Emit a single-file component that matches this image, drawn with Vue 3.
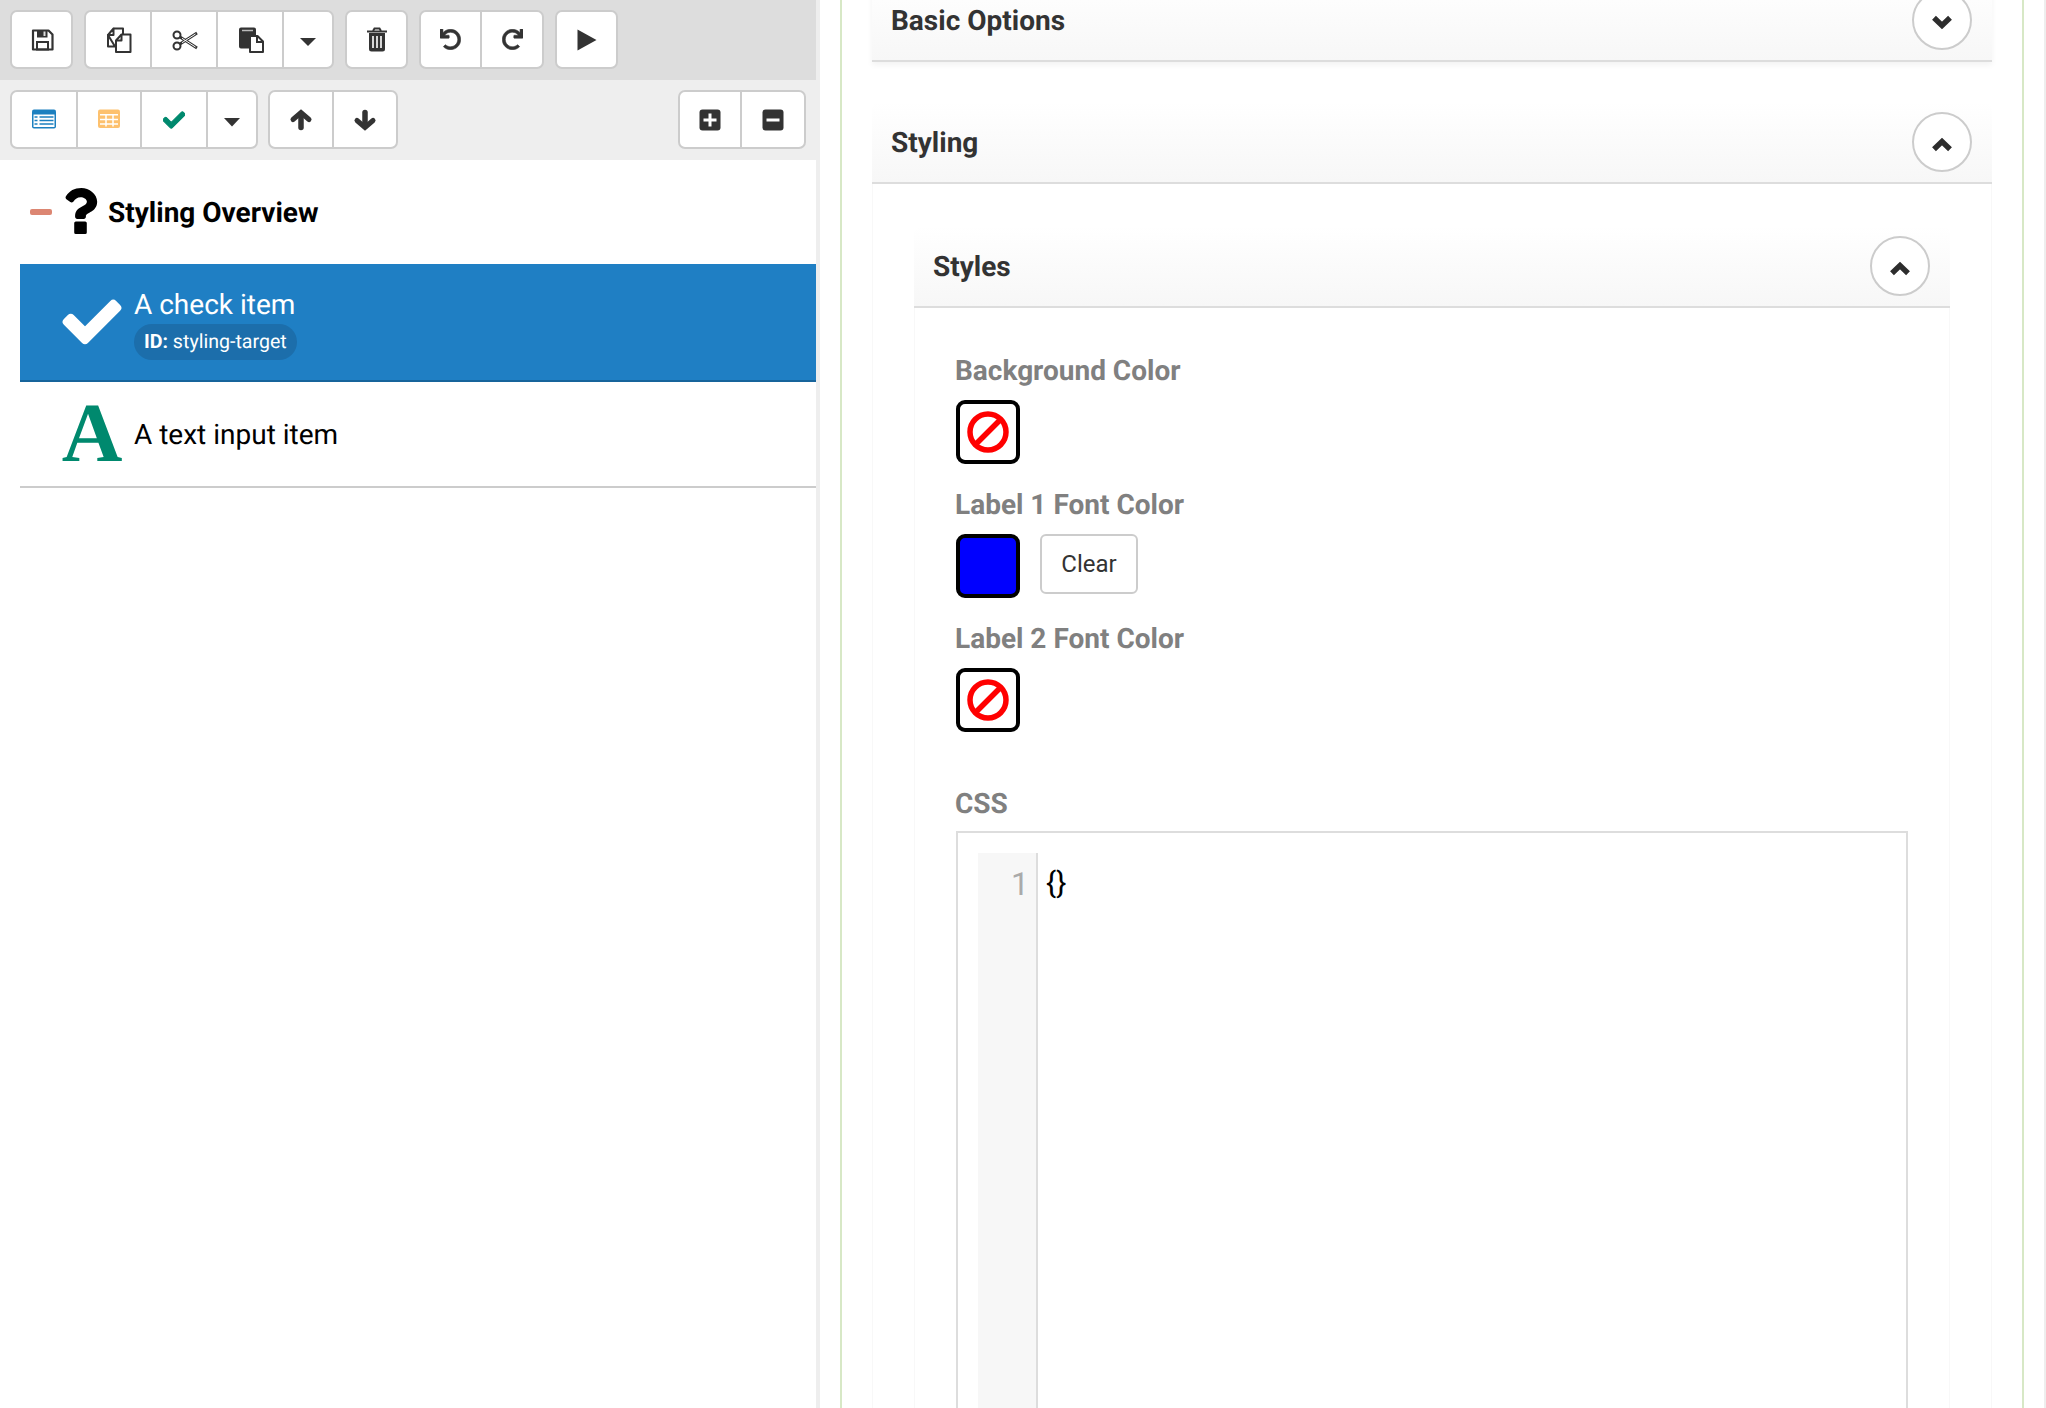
<script setup>
const check = 'M173.898 439.404l-166.4-166.4c-9.997-9.997-9.997-26.206 0-36.204l36.203-36.204c9.997-9.998 26.207-9.998 36.204 0L192 312.69 432.095 72.596c9.997-9.997 26.207-9.997 36.204 0l36.203 36.204c9.997 9.997 9.997 26.206 0 36.204l-294.4 294.401c-9.998 9.997-26.207 9.997-36.204-.001z'
const undo = 'M212.333 224.333H12c-6.627 0-12-5.373-12-12V12C0 5.373 5.373 0 12 0h48c6.627 0 12 5.373 12 12v78.112C117.773 39.279 184.26 7.47 258.175 8.007c136.906.994 246.448 111.623 246.157 248.532C504.041 393.258 393.12 504 256.333 504c-64.089 0-122.496-24.313-166.51-64.215-5.099-4.622-5.334-12.554-.467-17.42l33.967-33.967c4.474-4.474 11.662-4.717 16.401-.525C170.76 415.336 211.58 432 256.333 432c97.268 0 176-78.716 176-176 0-97.267-78.716-176-176-176-58.496 0-110.28 28.476-142.274 72.333h98.274c6.627 0 12 5.373 12 12v48c0 6.627-5.373 12-12 12z'
const question = 'M202.021 0C122.202 0 70.503 32.703 29.914 91.026c-7.363 10.58-5.093 25.086 5.178 32.874l43.138 32.709c10.373 7.865 25.132 6.026 33.253-4.148 25.049-31.381 43.63-49.449 82.757-49.449 30.764 0 68.816 19.799 68.816 49.631 0 22.552-18.617 34.134-48.993 51.164-35.423 19.86-82.299 44.576-82.299 106.405V320c0 13.255 10.745 24 24 24h72.471c13.255 0 24-10.745 24-24v-5.773c0-42.86 125.268-44.645 125.268-160.627C377.504 66.256 286.902 0 202.021 0zM140 372h104a18 18 0 0 1 18 18v104a18 18 0 0 1-18 18H140a18 18 0 0 1-18-18V390a18 18 0 0 1 18-18z'
</script>

<template>
  <div class="page">
    <aside class="left">
      <div class="bar bar-top">
        <div class="group">
          <button class="btn" style="width:63px">
            <svg viewBox="0 0 32 32" class="ico"><path d="M7 6.500h15.500l4 4V25.500H7z" fill="none" stroke="#333" stroke-width="2.200" stroke-linejoin="round"/><path d="M11 6h10.500v7.500H11z" fill="#333"/><path d="M17.500 7.500h2v4.500h-2z" fill="#ddd"/><path d="M11 18h11v7.500H11z" fill="none" stroke="#333" stroke-width="2"/></svg>
          </button>
        </div>
        <div class="group">
          <button class="btn" style="width:68px">
            <svg viewBox="0 0 32 32" class="ico"><path d="M11.500 4.500H21V10M13 22.500H6V11z" fill="none" stroke="#333" stroke-width="2" stroke-linejoin="round"/><path d="M11.500 4.500L6 11h5.500z" fill="none" stroke="#333" stroke-width="2" stroke-linejoin="round"/><path d="M19.500 10.500H28.500V28H14V16.500z" fill="#fff" stroke="#333" stroke-width="2" stroke-linejoin="round"/><path d="M19.500 10.500v6H14" fill="none" stroke="#333" stroke-width="2" stroke-linejoin="round"/></svg>
          </button>
          <button class="btn" style="width:66px">
            <svg viewBox="0 0 32 32" class="ico"><circle cx="9" cy="11" r="3.500" fill="none" stroke="#333" stroke-width="2"/><circle cx="9" cy="22" r="3.500" fill="none" stroke="#333" stroke-width="2"/><path d="M12 13L29 24M12 20L29 9" fill="none" stroke="#333" stroke-width="2.800"/><path d="M14 14.300L27.500 23M14 18.700L27.500 10" fill="none" stroke="#fff" stroke-width="1"/></svg>
          </button>
          <button class="btn" style="width:66px">
            <svg viewBox="0 0 32 32" class="ico"><path d="M7 3.500h13a2 2 0 0 1 2 2V12h-7v12.500H7a2 2 0 0 1-2-2v-17a2 2 0 0 1 2-2z" fill="#333"/><path d="M8 6.500h11" stroke="#bbb" stroke-width="1.500"/><path d="M16 12h7.500l5.500 5.500V28H16z" fill="#fff" stroke="#333" stroke-width="2" stroke-linejoin="round"/><path d="M23 12.500v5.500h6" fill="none" stroke="#333" stroke-width="2"/></svg>
          </button>
          <button class="btn" style="width:50px">
            <svg viewBox="0 0 32 32" class="ico"><path d="M8 14h16l-8 8z" fill="#333"/></svg>
          </button>
        </div>
        <div class="group">
          <button class="btn" style="width:63px">
            <svg viewBox="0 0 32 32" class="ico"><path d="M6 7.500h20" stroke="#333" stroke-width="2"/><path d="M12 7l1.500-2.500h5L20 7" fill="none" stroke="#333" stroke-width="2"/><path d="M8 9h16v16a2.500 2.500 0 0 1-2.500 2.500h-11A2.500 2.500 0 0 1 8 25z" fill="#333"/><path d="M12 12v12M16 12v12M20 12v12" stroke="#fff" stroke-width="1.600"/></svg>
          </button>
        </div>
        <div class="group">
          <button class="btn" style="width:63px">
            <svg viewBox="0 0 512 512" class="ico-21"><path :d="undo" fill="#333" stroke="#333" stroke-width="14"/></svg>
          </button>
          <button class="btn" style="width:62px">
            <svg viewBox="0 0 512 512" class="ico-21 flip"><path :d="undo" fill="#333" stroke="#333" stroke-width="14"/></svg>
          </button>
        </div>
        <div class="group">
          <button class="btn" style="width:63px">
            <svg viewBox="0 0 32 32" class="ico"><path d="M6.500 5.500L25.500 16 6.500 26.500z" fill="#333"/></svg>
          </button>
        </div>
      </div>

      <div class="bar bar-sub">
        <div class="group">
          <button class="btn" style="width:68px">
            <svg viewBox="0 0 32 32" class="ico"><rect x="4" y="5.500" width="24" height="19" rx="2" fill="#1c80c0"/><path d="M5.500 10.500h21V23h-21z" fill="#fff"/><path d="M6.500 13h3M6.500 16.500h3M6.500 20h3M11.500 13h14M11.500 16.500h14M11.500 20h14" stroke="#1c80c0" stroke-width="1.700"/></svg>
          </button>
          <button class="btn" style="width:64px">
            <svg viewBox="0 0 32 32" class="ico"><rect x="5" y="5.500" width="22" height="18.500" rx="2" fill="#fdc16e"/><path d="M7 10.800h18M7 15.500h18M7 20h18M13 10v12.500M20 10v12.500" stroke="#fff" stroke-width="1.500"/></svg>
          </button>
          <button class="btn" style="width:66px">
            <svg viewBox="0 0 512 512" class="ico-22"><path :d="check" fill="#00896e" stroke="#00896e" stroke-width="24" stroke-linejoin="round"/></svg>
          </button>
          <button class="btn" style="width:50px">
            <svg viewBox="0 0 32 32" class="ico"><path d="M8 14h16l-8 8.500z" fill="#333"/></svg>
          </button>
        </div>
        <div class="group">
          <button class="btn" style="width:66px">
            <svg viewBox="0 0 32 32" class="ico"><path d="M8 15.500L16 8.500L24 15.500" fill="none" stroke="#333" stroke-width="5" stroke-linecap="round"/><path d="M16 10v13.500" stroke="#333" stroke-width="5.500" stroke-linecap="round"/></svg>
          </button>
          <button class="btn" style="width:64px">
            <svg viewBox="0 0 32 32" class="ico turn"><path d="M8 15.500L16 8.500L24 15.500" fill="none" stroke="#333" stroke-width="5" stroke-linecap="round"/><path d="M16 10v13.500" stroke="#333" stroke-width="5.500" stroke-linecap="round"/></svg>
          </button>
        </div>
        <div class="group end">
          <button class="btn" style="width:64px">
            <svg viewBox="0 0 32 32" class="ico"><rect x="5.500" y="5.500" width="21" height="21" rx="3" fill="#333"/><path d="M16 9.500v13M9.500 16h13" stroke="#fff" stroke-width="3"/></svg>
          </button>
          <button class="btn" style="width:64px">
            <svg viewBox="0 0 32 32" class="ico"><rect x="5.500" y="5.500" width="21" height="21" rx="3" fill="#333"/><path d="M9.500 16h13" stroke="#fff" stroke-width="3"/></svg>
          </button>
        </div>
      </div>

      <div class="tree">
        <div class="tree-title">
          <span class="minus"></span>
          <svg viewBox="0 0 384 512" class="q"><path :d="question" fill="#000"/></svg>
          <span class="title-text">Styling Overview</span>
        </div>
        <div class="row selected">
          <span class="row-ico"><svg viewBox="0 0 512 512" class="big-check"><path :d="check" fill="#fff" stroke="#fff" stroke-width="24" stroke-linejoin="round"/></svg></span>
          <div class="stack">
            <div class="row-label">A check item</div>
            <span class="badge"><b>ID:</b> styling-target</span>
          </div>
        </div>
        <div class="row plain">
          <span class="row-ico letter">A</span>
          <div class="row-label dark">A text input item</div>
        </div>
      </div>
    </aside>

    <main class="right">
      <div class="frame">
        <section class="panel closed">
          <header class="head">
            <h3>Basic Options</h3>
            <span class="circle"><svg viewBox="0 0 22 15" class="chev down"><path d="M3 3.200L11 11L19 3.200" fill="none" stroke="#2d2d2d" stroke-width="5.500"/></svg></span>
          </header>
        </section>

        <section class="panel">
          <header class="head">
            <h3>Styling</h3>
            <span class="circle"><svg viewBox="0 0 22 15" class="chev up"><path d="M3 3.200L11 11L19 3.200" fill="none" stroke="#2d2d2d" stroke-width="5.500"/></svg></span>
          </header>
          <div class="panel-body">
            <section class="panel inner">
              <header class="head">
                <h3>Styles</h3>
                <span class="circle"><svg viewBox="0 0 22 15" class="chev up"><path d="M3 3.200L11 11L19 3.200" fill="none" stroke="#2d2d2d" stroke-width="5.500"/></svg></span>
              </header>
              <div class="inner-body">
                <label class="lbl">Background Color</label>
                <div class="swatch-row">
                  <span class="swatch"><svg viewBox="0 0 44 44" class="ban"><circle cx="22" cy="22" r="18" fill="none" stroke="#f00" stroke-width="5.500"/><path d="M9.500 34.500L34.500 9.500" stroke="#f00" stroke-width="5.500"/></svg></span>
                </div>
                <label class="lbl">Label 1 Font Color</label>
                <div class="swatch-row">
                  <span class="swatch blue"></span>
                  <button class="clear">Clear</button>
                </div>
                <label class="lbl">Label 2 Font Color</label>
                <div class="swatch-row">
                  <span class="swatch"><svg viewBox="0 0 44 44" class="ban"><circle cx="22" cy="22" r="18" fill="none" stroke="#f00" stroke-width="5.500"/><path d="M9.500 34.500L34.500 9.500" stroke="#f00" stroke-width="5.500"/></svg></span>
                </div>
                <label class="lbl css">CSS</label>
                <div class="editor">
                  <div class="gutter">1</div>
                  <div class="code">{}</div>
                </div>
              </div>
            </section>
          </div>
        </section>
      </div>
    </main>
  </div>
</template>

<style>
html, body { margin: 0; overflow: hidden; background: #fff; }
</style>

<style scoped>
.page { width: 2046px; height: 1408px; display: flex; overflow: hidden; font-family: Roboto, "Liberation Sans", sans-serif; color: #333; background: #fff; text-rendering: geometricPrecision; }
.left { width: 816px; flex: none; }
.bar { height: 80px; box-sizing: border-box; padding-top: 10px; padding-left: 10px; display: flex; align-items: flex-start; }
.bar-top { background: #ddd; }
.bar-top .group { margin-right: 11px; }
.bar-sub { background: #eee; }
.group { display: flex; height: 59px; box-sizing: border-box; margin-right: 10px; border: 2px solid #ccc; border-radius: 7px; background: #fff; }
.group.end { margin-left: auto; }
.btn { box-sizing: border-box; height: 100%; margin: 0; padding: 0; border: 0; border-right: 2px solid #ccc; background: transparent; display: flex; align-items: center; justify-content: center; flex: none; }
.btn:last-child { border-right: 0; }
.bar .btn:first-child { margin-left: -2px; padding-left: 2px; }
.bar .btn:last-child { margin-right: -2px; padding-right: 2px; }
.ico { width: 32px; height: 32px; display: block; }
.ico-22 { width: 22px; height: 22px; display: block; }
.ico-21 { width: 21px; height: 21px; display: block; }
.flip { transform: scaleX(-1); }
.turn { transform: rotate(180deg); }
.tree { padding-left: 20px; }
.tree-title { height: 104px; display: flex; align-items: center; }
.minus { width: 22px; height: 6px; margin-left: 10px; border-radius: 2px; background: #dc8672; }
.q { width: 35px; height: 46px; margin-left: 11px; display: block; transform: translateY(-1px); }
.title-text { margin-left: 10px; font-size: 28px; font-weight: 700; color: #000; }
.row { display: flex; align-items: center; box-sizing: border-box; }
.selected { height: 118px; background: #1f7fc4; border-bottom: 2px solid #17649b; color: #fff; }
.plain { height: 106px; border-bottom: 2px solid #ccc; }
.row-ico { width: 114px; display: flex; justify-content: center; flex: none; box-sizing: border-box; padding-left: 30px; }
.big-check { width: 56px; height: 56px; display: block; overflow: visible; }
.letter { font-family: "Liberation Serif", serif; font-weight: 700; font-size: 84px; line-height: 84px; color: #00896e; height: 84px; }
.stack { align-self: flex-start; display: flex; flex-direction: column; align-items: flex-start; padding-top: 23px; }
.row-label { font-size: 28px; font-weight: 400; line-height: 36px; }
.row-label.dark { color: #000; padding-top: 2px; }
.badge { box-sizing: border-box; height: 36px; line-height: 36px; padding: 0 10px; margin-top: 1px; border-radius: 18px; background: #1c6eab; font-size: 19.600px; color: #fff; }
.badge b { font-weight: 700; }
.right { flex: 1; min-width: 0; box-sizing: border-box; border-left: 4px solid #eee; border-right: 2px solid #eee; padding-left: 20px; }
.frame { height: 1408px; box-sizing: border-box; width: 1184px; border-left: 2px solid #d7e8c6; border-right: 2px solid #d7e8c6; padding: 0 30px; overflow: hidden; }
.panel { box-sizing: border-box; }
.panel.closed { margin-top: -20px; margin-bottom: 40px; box-shadow: 0 3px 6px rgba(0,0,0,.05); }
.head { height: 82px; box-sizing: border-box; border-bottom: 2px solid #ddd; background: linear-gradient(#fff, #f7f7f7); display: flex; align-items: center; justify-content: space-between; padding: 0 20px; border-radius: 8px 8px 0 0; }
.head h3 { margin: 0 0 0 -1px; padding-top: 2px; font-size: 28px; font-weight: 700; color: #333; line-height: 36px; }
.circle { width: 60px; height: 60px; box-sizing: border-box; border: 2px solid #ccc; border-radius: 50%; background: #fff; display: flex; align-items: center; justify-content: center; }
.chev { width: 22px; height: 15px; display: block; }
.down { transform: translateY(1.500px); }
.up { transform: translateY(2.500px) rotate(180deg); }
.panel-body { padding: 42px 41px 0 41px; border-left: 1px solid #f8f8f8; border-right: 1px solid #f8f8f8; }
.inner-body { padding: 44px 40px 0 41px; border-left: 1px solid #f8f8f8; border-right: 1px solid #f8f8f8; }
.lbl { display: block; margin-left: -1px; padding-top: 1px; font-size: 28px; font-weight: 700; color: #808080; line-height: 36px; }
.swatch-row { display: flex; align-items: flex-start; margin: 11px 0 18px; height: 68px; }
.swatch { width: 64px; height: 64px; box-sizing: border-box; border: 4px solid #000; border-radius: 9px; display: flex; align-items: center; justify-content: center; background: #fff; }
.swatch.blue { background: #00f; }
.ban { width: 44px; height: 44px; display: block; }
.clear { width: 98px; height: 60px; box-sizing: border-box; margin: 0 0 0 20px; padding: 0; border: 2px solid #ccc; border-radius: 6px; background: #fff; font-family: inherit; font-size: 24px; color: #333; }
.css { margin-top: 49px; }
.editor { display: flex; box-sizing: border-box; height: 700px; width: 952px; margin-top: 9px; border: 2px solid #ddd; padding: 20px 0 0 20px; }
.gutter { width: 60px; box-sizing: border-box; background: #f7f7f7; border-right: 2px solid #ddd; text-align: right; padding-right: 7px; font-size: 32px; line-height: 62px; color: #aaa; }
.code { padding-left: 8px; font-size: 30px; line-height: 62px; color: #000; }
</style>
